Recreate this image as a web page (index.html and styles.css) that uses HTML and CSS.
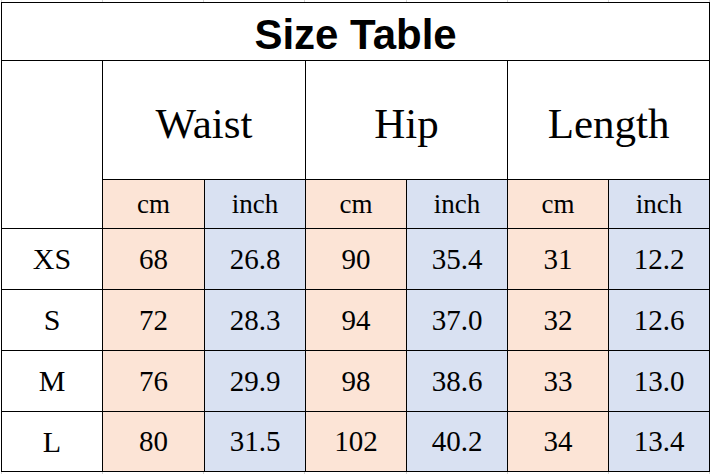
FILE: index.html
```html
<!DOCTYPE html>
<html>
<head>
<meta charset="utf-8">
<link rel="stylesheet" href="styles.css">
</head>
<body>
<div class="sheet">
<table class="size-table">
  <colgroup>
    <col class="c1"><col class="c2"><col class="c3"><col class="c4"><col class="c5"><col class="c6"><col class="c7">
  </colgroup>
  <tr class="r-title"><td colspan="7" class="title">Size Table</td></tr>
  <tr class="r-head">
    <td rowspan="2" class="blank"></td>
    <td colspan="2" class="group">Waist</td>
    <td colspan="2" class="group">Hip</td>
    <td colspan="2" class="group">Length</td>
  </tr>
  <tr class="r-unit">
    <td class="cm unit">cm</td><td class="in unit">inch</td>
    <td class="cm unit">cm</td><td class="in unit">inch</td>
    <td class="cm unit">cm</td><td class="in unit">inch</td>
  </tr>
  <tr class="r-data">
    <td class="size">XS</td>
    <td class="cm">68</td><td class="in">26.8</td>
    <td class="cm">90</td><td class="in">35.4</td>
    <td class="cm">31</td><td class="in">12.2</td>
  </tr>
  <tr class="r-data">
    <td class="size">S</td>
    <td class="cm">72</td><td class="in">28.3</td>
    <td class="cm">94</td><td class="in">37.0</td>
    <td class="cm">32</td><td class="in">12.6</td>
  </tr>
  <tr class="r-data">
    <td class="size">M</td>
    <td class="cm">76</td><td class="in">29.9</td>
    <td class="cm">98</td><td class="in">38.6</td>
    <td class="cm">33</td><td class="in">13.0</td>
  </tr>
  <tr class="r-data r-last">
    <td class="size">L</td>
    <td class="cm">80</td><td class="in">31.5</td>
    <td class="cm">102</td><td class="in">40.2</td>
    <td class="cm">34</td><td class="in">13.4</td>
  </tr>
</table>
</div>
</body>
</html>
```
FILE: styles.css
```css
html, body {
  margin: 0;
  padding: 0;
  background: #fff;
}
body {
  width: 711px;
  height: 474px;
  overflow: hidden;
  background-image: repeating-linear-gradient(to right, #d4d4d4 0 1px, transparent 1px 101.15px);
  background-position: 1px 0;
}
.sheet {
  padding-top: 2px;
  padding-left: 1px;
}
.size-table {
  border-collapse: collapse;
  table-layout: fixed;
  width: 709px;
  background: #fff;
  color: #000;
}
.size-table td {
  font-family: "Liberation Serif", "Times New Roman", serif;
  border: 1px solid #000;
  padding: 0;
  text-align: center;
  vertical-align: middle;
  line-height: 1;
}
.c1 { width: 101px; }
.c2 { width: 102px; }
.c3, .c4, .c5, .c6, .c7 { width: 101px; }
.r-title { height: 58px; }
.r-head { height: 119px; }
.r-unit { height: 49px; }
.r-data { height: 61px; }
.r-last { height: 60px; }
.size-table td.title {
  font-family: "Liberation Sans", Arial, sans-serif;
  font-weight: bold;
  font-size: 42px;
  padding-top: 6px;
}
.size-table td.group {
  font-size: 43px;
  padding-top: 6px;
}
.size-table td.unit {
  font-size: 27px;
}
.r-data td {
  font-size: 29px;
}
.size-table .r-data td.size {
  font-size: 30px;
}
.cm { background: #fce4d6; }
.in { background: #d9e1f2; }
```
